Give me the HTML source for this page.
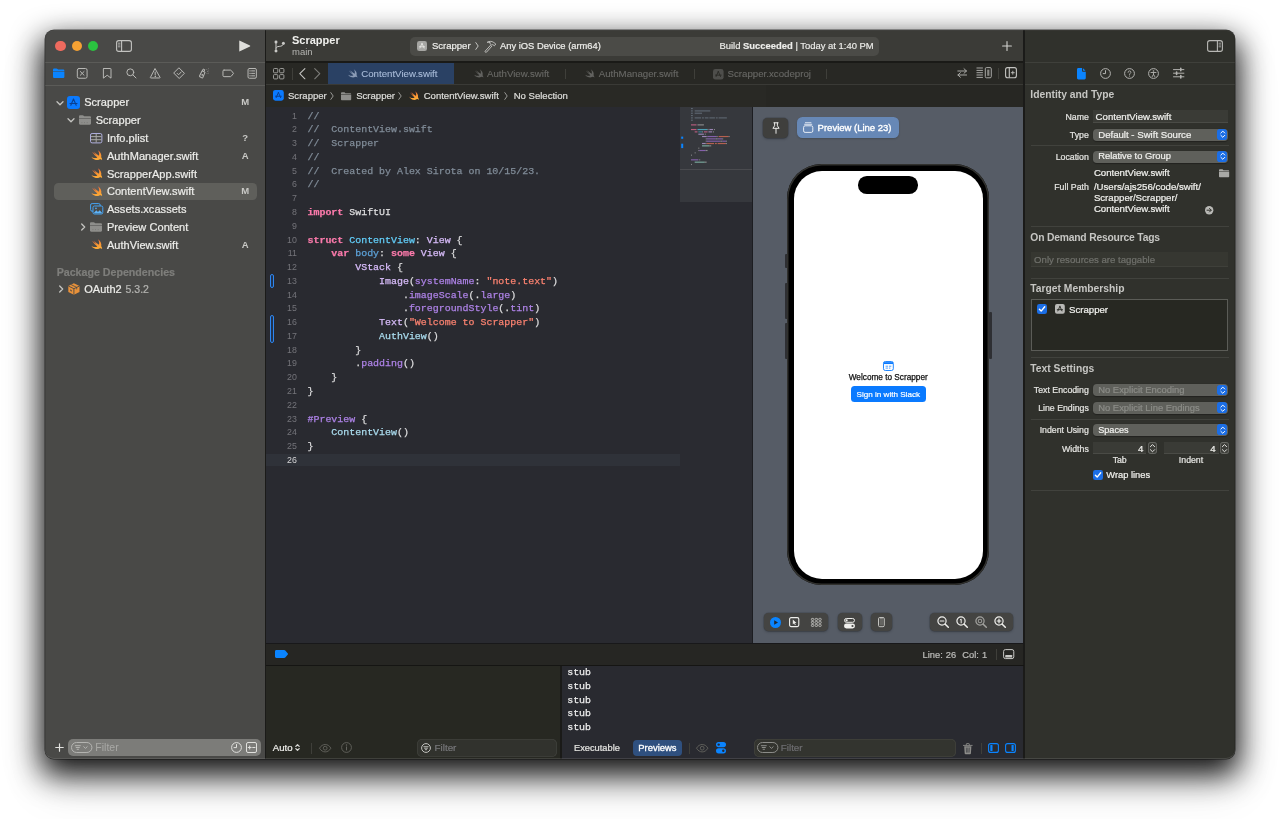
<!DOCTYPE html>
<html lang="en">
<head>
<meta charset="utf-8">
<title>Scrapper — ContentView.swift</title>
<style>
*{box-sizing:border-box;margin:0;padding:0}
html,body{width:1280px;height:819px;overflow:hidden;background:#fff}
body{font-family:"Liberation Sans",sans-serif;font-size:11px;color:#e6e6e4;position:relative;-webkit-font-smoothing:antialiased}
.abs{position:absolute}
#win{position:absolute;left:45px;top:30px;width:1190px;height:729px;border-radius:9px;background:#30312c;
  box-shadow:0 0 0 0.5px rgba(0,0,0,.6),0 12.500px 30px 3.500px rgba(0,0,0,.92),0 26px 50px rgba(0,0,0,.12)}
#clip{position:absolute;inset:0;border-radius:9px;overflow:hidden}
#hl{position:absolute;inset:0;border-radius:9px;box-shadow:inset 0 -1px 0 rgba(255,255,255,.13),inset 0 1px 0 rgba(255,255,255,.05),inset 0 0 0 1px rgba(0,0,0,.10);pointer-events:none}
/* panes: page coordinates (wrapper #pg is offset by -45,-30 inside the window) */
#pg{position:absolute;left:-45px;top:-30px;width:1280px;height:819px;will-change:transform}
#side{left:45px;top:30px;width:220px;height:729px;background:#494947}
#sdiv{left:265px;top:30px;width:1px;height:729px;background:#1b1b19}
#edtb{left:266px;top:30px;width:758px;height:31px;background:#3b3b37}
#edtbl{left:266px;top:61px;width:758px;height:2px;background:#1a1a17}
#tabbar{left:266px;top:63px;width:758px;height:22px;background:#282824}
#jump{left:266px;top:85px;width:758px;height:22px;background:#292925}
#code{left:266px;top:107px;width:414px;height:536px;background:#292a30}
#mini{left:680px;top:107px;width:73px;height:536px;background:#2a2b31}
#canvas{left:753px;top:107px;width:271px;height:536px;background:#565c66}
#dbar{left:266px;top:643px;width:758px;height:22px;background:#262623}
#vars{left:266px;top:665px;width:295px;height:94px;background:#272822}
#cons{left:561px;top:665px;width:463px;height:94px;background:#292a30}
#idiv{left:1023.400px;top:30px;width:1.200px;height:729px;background:#1b1b19}
#insp{left:1024.600px;top:30px;width:210.400px;height:729px;background:#30312c}
svg{display:block;overflow:visible}
.ic{position:absolute}

/* ---------- sidebar ---------- */
.tl{position:absolute;top:40.8px;width:10.4px;height:10.4px;border-radius:50%}
#side .ln{position:absolute;left:0;width:220px;height:1px;background:#5a5a57}
.nv{position:absolute;top:67.100px;width:12.400px;height:12.400px}
.nv *{fill:none;stroke:#b9b9b6;stroke-width:1.120;stroke-linecap:round;stroke-linejoin:round}
.row,.jb,.iv,.il,.dt{-webkit-text-stroke:.22px currentColor}
.tab{-webkit-text-stroke:.12px currentColor}
.row{position:absolute;height:18px;line-height:18px;font-size:11px;color:#ecece9;white-space:nowrap;letter-spacing:.05px}
.st{position:absolute;width:20px;left:235.2px;text-align:center;font-size:9.500px;font-weight:bold;color:#c9c9c6;height:18px;line-height:18px}
.chev{position:absolute;width:8px;height:8px}
.chev path{fill:none;stroke:#c4c4c1;stroke-width:1.3;stroke-linecap:round;stroke-linejoin:round}

/* ---------- editor toolbar / tabs / jump bar ---------- */
.t{position:absolute;white-space:nowrap;height:14px;line-height:14px}
.tab{font-size:9.700px;color:#686865}
.jb{font-size:9.550px;color:#dcdcd9}
.sep{position:absolute;width:1px;background:#3f3f3a}

/* ---------- source editor ---------- */
.cl,.stub{-webkit-text-stroke:.25px currentColor}
.cl{position:absolute;left:307.500px;height:13.770px;line-height:13.770px;font-family:"Liberation Mono",monospace;font-size:9.950px;color:#dfdfe0;white-space:pre;letter-spacing:0}
.lnn{position:absolute;left:266px;width:30.800px;text-align:right;height:13.770px;line-height:13.770px;font-size:8.800px;color:#74747a}
.k{color:#fb7aab;font-weight:bold}.c{color:#808c98}.s{color:#fb8270}.td{color:#62cdf8}.od{color:#5da2d8}.pc{color:#aadcee}.oc{color:#d8bcfa}.of{color:#ad82e6}

/* ---------- preview canvas ---------- */
.cbtn{position:absolute;top:612.600px;height:18.800px;border-radius:4.500px;background:#444442;box-shadow:0 0 0 .5px rgba(0,0,0,.18),0 1px 2.500px rgba(0,0,0,.28)}
.mg{position:absolute;top:615.800px;width:12px;height:12px}

/* ---------- debug area ---------- */
.dt{position:absolute;white-space:nowrap;height:14px;line-height:14px;font-size:9.600px}
.stub{position:absolute;left:567.200px;height:13.700px;line-height:13.700px;font-family:"Liberation Mono",monospace;font-size:9.950px;color:#ececec;white-space:pre}

/* ---------- inspector ---------- */
.ih{position:absolute;left:1030.300px;height:14px;line-height:14px;font-size:10.300px;font-weight:bold;color:#c6c6c3;white-space:nowrap}
.il{position:absolute;left:1025px;width:63.800px;text-align:right;height:13px;line-height:13px;font-size:8.750px;color:#e4e4e1;white-space:nowrap}
.iv{position:absolute;height:13px;line-height:13px;font-size:9.650px;color:#f0f0ed;white-space:nowrap}
.pop{position:absolute;left:1093px;width:135.400px;height:12px;border-radius:3.800px;background:#5f605b;overflow:hidden;box-shadow:0 .5px 1px rgba(0,0,0,.3)}
.pop i{position:absolute;right:1px;top:.7px;width:10px;height:10.600px;background:#1b6ee6;border-radius:2.800px}
.isep{position:absolute;left:1030.500px;width:198px;height:1px;background:#41423d}
.fld{position:absolute;background:#3a3b36;box-shadow:inset 0 -1px 0 #4a4b46}
.cb{position:absolute;width:10px;height:10px;border-radius:2.300px;background:#1b6ee6}
.stp{position:absolute;width:9px;height:12.400px;border-radius:3px;background:#3d3e39;box-shadow:inset 0 0 0 .9px #666762}
</style>
</head>
<body>
<div id="win">
 <div id="clip"><div id="pg">
  <div id="side" class="abs"></div>
  <div id="sdiv" class="abs"></div>
  <div id="edtb" class="abs"></div>
  <div id="edtbl" class="abs"></div>
  <div id="tabbar" class="abs"></div>
  <div id="jump" class="abs"></div>
  <div id="code" class="abs"></div>
  <div id="mini" class="abs"></div>
  <div id="canvas" class="abs"></div>
  <div id="dbar" class="abs"></div>
  <div id="vars" class="abs"></div>
  <div id="cons" class="abs"></div>
  <div id="idiv" class="abs"></div>
  <div id="insp" class="abs"></div>

  <!-- ===== sidebar content ===== -->
  <div class="tl" style="left:55.4px;background:#ee6a5e"></div>
  <div class="tl" style="left:71.7px;background:#f5a133"></div>
  <div class="tl" style="left:87.6px;background:#2bc240"></div>
  <!-- sidebar toggle -->
  <svg class="ic" style="left:116.2px;top:40.4px" width="16" height="12" viewBox="0 0 16 12"><rect x=".6" y=".6" width="14.8" height="10.8" rx="2.2" fill="none" stroke="#c3c3c0" stroke-width="1.1"/><path d="M5.6.8v10.4" stroke="#c3c3c0" stroke-width="1.1"/><path d="M2.3 3.2h1.7M2.3 5h1.7M2.3 6.8h1.7" stroke="#c3c3c0" stroke-width=".8" stroke-linecap="round"/></svg>
  <!-- run -->
  <svg class="ic" style="left:238.6px;top:40.3px" width="12" height="12" viewBox="0 0 12 12"><path d="M.9.7 11 5.6a.45.45 0 0 1 0 .8L.9 11.3a.45.45 0 0 1-.65-.4V1.1A.45.45 0 0 1 .9.7z" fill="#dededb"/></svg>
  <div class="abs" style="left:45px;top:61.5px;width:220px;height:1px;background:#5b5b58"></div>
  <div class="abs" style="left:45px;top:84.5px;width:220px;height:1px;background:#5b5b58"></div>
  <!-- navigator icons -->
  <svg class="ic" style="left:52.6px;top:68px" width="11.4" height="10.2" viewBox="0 0 11.4 10.2"><path d="M0 1.7C0 .9.6.4 1.3.4h2.2c.5 0 .8.2 1.1.5l.6.7h4.9c.7 0 1.3.5 1.3 1.3v.5H0z" fill="#0a84ff"/><path d="M0 4.1h11.4v4.6c0 .8-.6 1.3-1.3 1.3H1.3C.6 10 0 9.500 0 8.700z" fill="#0a84ff"/></svg>
  <svg class="nv" style="left:76.3px" viewBox="0 0 14 14"><rect x="1.5" y="1.700" width="11" height="11" rx="1.8"/><path d="M4.900 5.100l4.200 4.200M9.100 5.100l-4.200 4.200"/></svg>
  <svg class="nv" style="left:100.8px" viewBox="0 0 14 14"><path d="M3.300 1.700h7.400a.6.600 0 0 1 .6.600v10.300L7 9.300l-4.300 3.300V2.300a.6.600 0 0 1 .6-.6z"/></svg>
  <svg class="nv" style="left:124.8px" viewBox="0 0 14 14"><circle cx="6" cy="6" r="3.900"/><path d="M8.900 8.900l3.500 3.500" stroke-width="1.300"/></svg>
  <svg class="nv" style="left:149.1px" viewBox="0 0 14 14"><path d="M7 2.100 12.400 11.600a.5.500 0 0 1-.4.800H2a.5.500 0 0 1-.4-.8z"/><path d="M7 5.700v3" stroke-width="1.200"/><circle cx="7" cy="10.500" r=".35" style="fill:#b9b9b6"/></svg>
  <svg class="nv" style="left:173.4px" viewBox="0 0 14 14"><path d="M7 1.200 12.900 7.100 7 13 1.100 7.100z"/><path d="M4.700 7.200l1.600 1.600 3-3.200" stroke-width="1.300"/></svg>
  <svg class="nv" style="left:197.7px" viewBox="0 0 14 14"><path d="M4.200 4.300 7.600 5.700 6 11.800a.8.800 0 0 1-1 .5l-2.400-.9a.8.800 0 0 1-.5-1z" transform="rotate(8 5 8)"/><path d="M5.200 4.200l.6-1.900 1.800.7-.6 1.800"/><rect x="4" y="8" width="1.600" height="1.800" style="fill:#b9b9b6;stroke:none"/><circle cx="10" cy="2.600" r=".45" style="fill:#b9b9b6;stroke:none"/><circle cx="11.700" cy="2.100" r=".45" style="fill:#b9b9b6;stroke:none"/><circle cx="10.600" cy="4.800" r=".45" style="fill:#b9b9b6;stroke:none"/><circle cx="12.200" cy="4.400" r=".45" style="fill:#b9b9b6;stroke:none"/><circle cx="10.200" cy="7.300" r=".45" style="fill:#b9b9b6;stroke:none"/><circle cx="12" cy="6.900" r=".45" style="fill:#b9b9b6;stroke:none"/></svg>
  <svg class="nv" style="left:221.8px" viewBox="0 0 14 14"><path d="M2.300 3.500h7.200c.4 0 .7.100.9.400L13 7.200l-2.600 3.300c-.2.300-.5.400-.9.400H2.300c-.7 0-1.200-.5-1.200-1.200V4.700c0-.7.500-1.200 1.200-1.200z"/></svg>
  <svg class="nv" style="left:246.3px" viewBox="0 0 14 14"><rect x="2.300" y="1.700" width="9.400" height="11" rx="1.500"/><path d="M4.300 4.400h.6M6.300 4.400h3.400M4.300 7.200h.6M6.300 7.200h3.400M4.300 10h.6M6.300 10h3.400"/></svg>

  <!-- ===== navigator tree ===== -->
  <div class="abs" style="left:53.500px;top:182.500px;width:203.500px;height:17.600px;border-radius:4.500px;background:#5f5f5b"></div>
  <svg class="chev" style="left:55.6px;top:98.5px" viewBox="0 0 8 8"><path d="M1 2.700 4 5.700 7 2.700"/></svg>
  <svg class="ic" style="left:66.9px;top:95.7px" width="13" height="13" viewBox="0 0 13 13"><rect width="13" height="13" rx="3" fill="#0a7aff"/><path d="M6.500 3 3.800 9.200M6.500 3 9.200 9.200M3 7.500h7" stroke="#0b3f8f" stroke-width="1.100" stroke-linecap="round" fill="none"/></svg>
  <div class="row" style="left:84.2px;top:93.2px">Scrapper</div>
  <div class="st" style="top:93.2px">M</div>
  <svg class="chev" style="left:66.8px;top:116.3px" viewBox="0 0 8 8"><path d="M1 2.700 4 5.700 7 2.700"/></svg>
  <svg class="ic" style="left:78.8px;top:115.1px" width="12" height="9.800" viewBox="0 0 12 9.800"><path d="M0 1.500C0 .7.500.2 1.200.2h2.400c.5 0 .8.200 1.100.5l.6.600h5.500c.7 0 1.200.5 1.200 1.200v.4H0z" fill="#8e8e8b"/><path d="M0 3.600h12v4.900c0 .7-.5 1.200-1.200 1.200H1.200C.5 9.700 0 9.200 0 8.500z" fill="#8e8e8b"/><path d="M2.600 7.600h.7M5.200 7.600h.7M7.800 7.600h.7" stroke="#494947" stroke-width=".7" opacity=".55"/></svg>
  <div class="row" style="left:95.7px;top:111.0px">Scrapper</div>
  <svg class="ic" style="left:89.900px;top:132.70000000000002px" width="12.400" height="10.400" viewBox="0 0 12.400 10.400"><rect x=".5" y=".5" width="11.400" height="9.400" rx="1.600" fill="none" stroke="#b0b0e0" stroke-width="1"/><path d="M.8 3.600h10.800M.8 6.700h10.800M6.200.8v8.800" stroke="#a8a8a6" stroke-width="1"/></svg>
  <div class="row" style="left:106.9px;top:128.9px">Info.plist</div>
  <div class="st" style="top:128.9px">?</div>
  <svg class="ic" style="left:90.8px;top:150.1px" width="11.4" height="10.6" viewBox="2.2 3.2 18.8 16.8"><linearGradient id="sg1" x1="0" y1="0" x2="0.25" y2="1"><stop offset="0" stop-color="#ee4f3c"/><stop offset=".5" stop-color="#f78b33"/><stop offset="1" stop-color="#fbab38"/></linearGradient><path fill="url(#sg1)" d="M13.543 3.41c4.114 2.47 6.545 7.162 5.549 11.131-.024.093-.05.181-.076.272l.002.001c2.062 2.538 1.5 5.258 1.236 4.745-1.072-2.086-3.066-1.568-4.088-1.043a6.803 6.803 0 0 1-.281.158l-.02.012-.002.002c-2.115 1.123-4.957 1.205-7.812-.022a12.568 12.568 0 0 1-5.64-4.838c.649.48 1.35.902 2.097 1.252 3.019 1.414 6.051 1.311 8.197-.002C9.651 12.73 7.101 9.67 5.146 7.191a10.628 10.628 0 0 1-1.005-1.384c2.34 2.142 6.038 4.83 7.365 5.576C8.69 8.408 6.208 4.743 6.324 4.86c4.436 4.47 8.528 6.996 8.528 6.996.154.085.27.154.36.213.085-.215.16-.437.224-.668.708-2.588-.09-5.548-1.893-7.992z"/></svg>
  <div class="row" style="left:106.9px;top:146.7px">AuthManager.swift</div>
  <div class="st" style="top:146.7px">A</div>
  <svg class="ic" style="left:90.8px;top:167.9px" width="11.4" height="10.6" viewBox="2.2 3.2 18.8 16.8"><linearGradient id="sg2" x1="0" y1="0" x2="0.25" y2="1"><stop offset="0" stop-color="#ee4f3c"/><stop offset=".5" stop-color="#f78b33"/><stop offset="1" stop-color="#fbab38"/></linearGradient><path fill="url(#sg2)" d="M13.543 3.41c4.114 2.47 6.545 7.162 5.549 11.131-.024.093-.05.181-.076.272l.002.001c2.062 2.538 1.5 5.258 1.236 4.745-1.072-2.086-3.066-1.568-4.088-1.043a6.803 6.803 0 0 1-.281.158l-.02.012-.002.002c-2.115 1.123-4.957 1.205-7.812-.022a12.568 12.568 0 0 1-5.64-4.838c.649.48 1.35.902 2.097 1.252 3.019 1.414 6.051 1.311 8.197-.002C9.651 12.73 7.101 9.67 5.146 7.191a10.628 10.628 0 0 1-1.005-1.384c2.34 2.142 6.038 4.83 7.365 5.576C8.69 8.408 6.208 4.743 6.324 4.86c4.436 4.47 8.528 6.996 8.528 6.996.154.085.27.154.36.213.085-.215.16-.437.224-.668.708-2.588-.09-5.548-1.893-7.992z"/></svg>
  <div class="row" style="left:106.9px;top:164.5px">ScrapperApp.swift</div>
  <svg class="ic" style="left:90.8px;top:185.70000000000002px" width="11.4" height="10.6" viewBox="2.2 3.2 18.8 16.8"><linearGradient id="sg3" x1="0" y1="0" x2="0.25" y2="1"><stop offset="0" stop-color="#ee4f3c"/><stop offset=".5" stop-color="#f78b33"/><stop offset="1" stop-color="#fbab38"/></linearGradient><path fill="url(#sg3)" d="M13.543 3.41c4.114 2.47 6.545 7.162 5.549 11.131-.024.093-.05.181-.076.272l.002.001c2.062 2.538 1.5 5.258 1.236 4.745-1.072-2.086-3.066-1.568-4.088-1.043a6.803 6.803 0 0 1-.281.158l-.02.012-.002.002c-2.115 1.123-4.957 1.205-7.812-.022a12.568 12.568 0 0 1-5.64-4.838c.649.48 1.35.902 2.097 1.252 3.019 1.414 6.051 1.311 8.197-.002C9.651 12.73 7.101 9.67 5.146 7.191a10.628 10.628 0 0 1-1.005-1.384c2.34 2.142 6.038 4.83 7.365 5.576C8.69 8.408 6.208 4.743 6.324 4.86c4.436 4.47 8.528 6.996 8.528 6.996.154.085.27.154.36.213.085-.215.16-.437.224-.668.708-2.588-.09-5.548-1.893-7.992z"/></svg>
  <div class="row" style="left:106.9px;top:182.3px">ContentView.swift</div>
  <div class="st" style="top:182.3px">M</div>
  <svg class="ic" style="left:89.600px;top:203.1px" width="13.400" height="11.600" viewBox="0 0 13.400 11.600"><rect x=".6" y=".6" width="9.600" height="7.600" rx="1.500" fill="none" stroke="#45a5f5" stroke-width="1"/><rect x="3" y="3" width="9.800" height="8" rx="1.500" fill="#494947" stroke="#45a5f5" stroke-width="1"/><path d="M3.600 10.300 6.300 7.300 8 9l1.700-1.800 2.700 3.100z" fill="#5db2f7"/><circle cx="6" cy="5.400" r=".8" fill="#5db2f7"/></svg>
  <div class="row" style="left:106.9px;top:200.1px">Assets.xcassets</div>
  <svg class="chev" style="left:79.1px;top:222.9px" viewBox="0 0 8 8"><path d="M2.700 1 5.700 4 2.700 7"/></svg>
  <svg class="ic" style="left:90.2px;top:222.0px" width="12" height="9.800" viewBox="0 0 12 9.800"><path d="M0 1.500C0 .7.500.2 1.200.2h2.400c.5 0 .8.200 1.100.5l.6.600h5.500c.7 0 1.200.5 1.200 1.200v.4H0z" fill="#8e8e8b"/><path d="M0 3.600h12v4.900c0 .7-.5 1.200-1.200 1.200H1.200C.5 9.700 0 9.200 0 8.500z" fill="#8e8e8b"/><path d="M2.600 7.600h.7M5.200 7.600h.7M7.800 7.600h.7" stroke="#494947" stroke-width=".7" opacity=".55"/></svg>
  <div class="row" style="left:106.9px;top:217.9px">Preview Content</div>
  <svg class="ic" style="left:90.8px;top:239.1px" width="11.4" height="10.6" viewBox="2.2 3.2 18.8 16.8"><linearGradient id="sg4" x1="0" y1="0" x2="0.25" y2="1"><stop offset="0" stop-color="#ee4f3c"/><stop offset=".5" stop-color="#f78b33"/><stop offset="1" stop-color="#fbab38"/></linearGradient><path fill="url(#sg4)" d="M13.543 3.41c4.114 2.47 6.545 7.162 5.549 11.131-.024.093-.05.181-.076.272l.002.001c2.062 2.538 1.5 5.258 1.236 4.745-1.072-2.086-3.066-1.568-4.088-1.043a6.803 6.803 0 0 1-.281.158l-.02.012-.002.002c-2.115 1.123-4.957 1.205-7.812-.022a12.568 12.568 0 0 1-5.64-4.838c.649.48 1.35.902 2.097 1.252 3.019 1.414 6.051 1.311 8.197-.002C9.651 12.73 7.101 9.67 5.146 7.191a10.628 10.628 0 0 1-1.005-1.384c2.34 2.142 6.038 4.83 7.365 5.576C8.69 8.408 6.208 4.743 6.324 4.86c4.436 4.47 8.528 6.996 8.528 6.996.154.085.27.154.36.213.085-.215.16-.437.224-.668.708-2.588-.09-5.548-1.893-7.992z"/></svg>
  <div class="row" style="left:106.9px;top:235.7px">AuthView.swift</div>
  <div class="st" style="top:235.7px">A</div>
  <div class="row" style="left:56.700px;top:263.300px;font-weight:bold;font-size:10.650px;color:#7e7e7b;letter-spacing:0">Package Dependencies</div>
  <svg class="chev" style="left:56.5px;top:284.6px" viewBox="0 0 8 8"><path d="M2.700 1 5.700 4 2.700 7"/></svg>
  <svg class="ic" style="left:67.800px;top:282.6px" width="11.800" height="12" viewBox="0 0 11.800 12"><path d="M5.900.3 11.500 3v6L5.900 11.700.3 9V3z" fill="#e8913a"/><path d="M.3 3 5.900 5.700 11.500 3M5.900 5.700v6" stroke="#494947" stroke-width=".9" fill="none"/><path d="M3.100 1.650 8.700 4.350v2" stroke="#494947" stroke-width=".8" fill="none"/><path d="M2 6.200l2 1v1.500l-2-1z" fill="#494947" opacity=".7"/></svg>
  <div class="row" style="left:84.2px;top:279.6px">OAuth2<span style="color:#b3b3b0;margin-left:3.600px;font-size:10.500px">5.3.2</span></div>
  <svg class="ic" style="left:54.900px;top:743.300px" width="9" height="9" viewBox="0 0 10 10"><path d="M5 .8v8.400M.8 5h8.400" stroke="#e2e2df" stroke-width="1.300" stroke-linecap="round"/></svg>
  <div class="abs" style="left:68px;top:739px;width:193px;height:17.400px;border-radius:5px;background:#7c7c79"></div>
  <svg class="ic" style="left:71.200px;top:742.300px" width="21.400" height="11" viewBox="0 0 21.400 11"><rect x=".5" y=".5" width="20.400" height="10" rx="5" fill="none" stroke="#b5b5b2" stroke-width="1"/><path d="M4.300 3.700h5M5.200 5.500h3.200M6.100 7.300h1.400" stroke="#b5b5b2" stroke-width="1" stroke-linecap="round"/><path d="M12.800 4.700l1.700 1.700 1.700-1.700" stroke="#b5b5b2" stroke-width="1" fill="none" stroke-linecap="round" stroke-linejoin="round"/></svg>
  <div class="abs" style="left:95.300px;top:739px;height:17.400px;line-height:17.400px;font-size:10.500px;color:#a9a9a6">Filter</div>
  <svg class="ic" style="left:231.400px;top:742.200px" width="11" height="11" viewBox="0 0 11 11"><circle cx="5.500" cy="5.500" r="4.900" fill="none" stroke="#e0e0dd" stroke-width="1"/><path d="M5.500 2.500v3.100H3" stroke="#e0e0dd" stroke-width="1" fill="none" stroke-linecap="round"/></svg>
  <svg class="ic" style="left:245.800px;top:742.200px" width="11" height="11" viewBox="0 0 11 11"><rect x=".5" y=".5" width="10" height="10" rx="1.500" fill="none" stroke="#e0e0dd" stroke-width="1"/><path d="M2.200 5.500h3M3.700 4v3M6.700 5.500h2.300" stroke="#e0e0dd" stroke-width="1" stroke-linecap="round"/></svg>

  <!-- ===== editor toolbar ===== -->
  <svg class="ic" style="left:273.800px;top:39.800px" width="11.400" height="13" viewBox="0 0 11.400 13"><circle cx="2" cy="2" r="1.500" fill="#c9c9c6"/><circle cx="2" cy="11" r="1.500" fill="#c9c9c6"/><circle cx="9.400" cy="3.300" r="1.500" fill="#c9c9c6"/><path d="M2 2v9M9.400 3.300c0 2.300-1.800 2.900-4.200 3.100C3.400 6.600 2 7 2 8.600" fill="none" stroke="#c9c9c6" stroke-width="1"/></svg>
  <div class="t" style="left:292px;top:33.300px;font-size:11px;font-weight:bold;color:#f0f0ed">Scrapper</div>
  <div class="t" style="left:292px;top:45.200px;font-size:9.500px;color:#b4b4b1">main</div>
  <div class="abs" style="left:410px;top:37px;width:469px;height:18.500px;border-radius:5px;background:#4b4b47"></div>
  <svg class="ic" style="left:417px;top:41.2px" width="10" height="10" viewBox="0 0 13 13"><rect width="13" height="13" rx="3" fill="#a6a6a3"/><path d="M6.500 3 3.800 9.200M6.500 3 9.200 9.200M3 7.500h7" stroke="#e4e4e1" stroke-width="1.200" stroke-linecap="round" fill="none"/></svg>
  <div class="t" style="left:432px;top:39.200px;font-size:9.500px;color:#eeeeeb;-webkit-text-stroke:.2px #eeeeeb">Scrapper</div>
  <svg class="ic" style="left:474.5px;top:42.2px" width="4" height="8" viewBox="0 0 4 8"><path d="M.8.600 3.200 4 .8 7.400" fill="none" stroke="#d0d0cd" stroke-width=".9" stroke-linecap="round" stroke-linejoin="round"/></svg>
  <svg class="ic" style="left:484px;top:39.800px" width="12.600" height="12.600" viewBox="0 0 12.600 12.600"><path d="M3.200 2.300c2-1.300 4.700-1.200 6.600.2l2 1.500-1.400 1.800-1.600-1.200-1 .5-1.900-1.500.4-.9c-.9-.5-2-.6-3.100-.4z" fill="none" stroke="#cfcfcc" stroke-width=".85" stroke-linejoin="round"/><path d="M6.800 5 1.300 11a.85.850 0 0 0 1.250 1.150L8 6" fill="none" stroke="#cfcfcc" stroke-width=".85" stroke-linejoin="round"/></svg>
  <div class="t" style="left:500px;top:39.200px;font-size:9.370px;color:#eeeeeb;-webkit-text-stroke:.2px #eeeeeb">Any iOS Device (arm64)</div>
  <div class="t" style="left:719.500px;top:39.200px;font-size:9.430px;color:#eeeeeb;-webkit-text-stroke:.15px #eeeeeb">Build <b>Succeeded</b> | Today at 1:40 PM</div>
  <svg class="ic" style="left:1002px;top:41px" width="10" height="10" viewBox="0 0 10 10"><path d="M5 .6v8.800M.6 5h8.800" stroke="#d2d2cf" stroke-width="1.100" stroke-linecap="round"/></svg>
  <svg class="ic" style="left:1206.600px;top:40.400px" width="16" height="12" viewBox="0 0 16 12"><rect x=".6" y=".6" width="14.800" height="10.800" rx="2.200" fill="none" stroke="#b8b8b5" stroke-width="1.100"/><path d="M10.400.8v10.400" stroke="#b8b8b5" stroke-width="1.100"/><path d="M12 3.200h1.700M12 5h1.700M12 6.800h1.700" stroke="#b8b8b5" stroke-width=".8" stroke-linecap="round"/></svg>
    <!-- ===== tab bar ===== -->
  <svg class="ic" style="left:273px;top:68px" width="11.400" height="11.400" viewBox="0 0 11.400 11.400"><g fill="none" stroke="#9e9e9b" stroke-width="1"><rect x=".5" y=".5" width="4.300" height="4.300" rx=".9"/><rect x="6.600" y=".5" width="4.300" height="4.300" rx=".9"/><rect x=".5" y="6.600" width="4.300" height="4.300" rx=".9"/><rect x="6.600" y="6.600" width="4.300" height="4.300" rx=".9"/></g></svg>
  <div class="sep" style="left:291.500px;top:68px;height:12px"></div>
  <svg class="ic" style="left:298.600px;top:68px" width="6.600" height="11.400" viewBox="0 0 6.600 11.400"><path d="M5.900.6.800 5.700l5.100 5.100" fill="none" stroke="#c4c4c1" stroke-width="1.100" stroke-linecap="round" stroke-linejoin="round"/></svg>
  <svg class="ic" style="left:314.400px;top:68px" width="6.600" height="11.400" viewBox="0 0 6.600 11.400"><path d="M.7.600 5.800 5.700.7 10.800" fill="none" stroke="#7c7c79" stroke-width="1.100" stroke-linecap="round" stroke-linejoin="round"/></svg>
  <div class="abs" style="left:328px;top:63px;width:126px;height:22px;background:#2a4164"></div>
  <svg class="ic" style="left:347.5px;top:69.3px" width="9.6" height="9" viewBox="2.200 3.200 18.800 16.800"><path fill="#8b9cb6" d="M13.543 3.410c4.114 2.470 6.545 7.162 5.549 11.131-.024.093-.05.181-.076.272l.002.001c2.062 2.538 1.500 5.258 1.236 4.745-1.072-2.086-3.066-1.568-4.088-1.043a6.803 6.803 0 0 1-.281.158l-.02.012-.002.002c-2.115 1.123-4.957 1.205-7.812-.022a12.568 12.568 0 0 1-5.640-4.838c.649.480 1.350.902 2.097 1.252 3.019 1.414 6.051 1.311 8.197-.002C9.651 12.730 7.101 9.670 5.146 7.191a10.628 10.628 0 0 1-1.005-1.384c2.340 2.142 6.038 4.830 7.365 5.576C8.690 8.408 6.208 4.743 6.324 4.860c4.436 4.470 8.528 6.996 8.528 6.996.154.085.270.154.360.213.085-.215.160-.437.224-.668.708-2.588-.09-5.548-1.893-7.992z"/></svg>
  <div class="t tab" style="left:361.200px;top:66.800px;color:#a8bbd8">ContentView.swift</div>
  <svg class="ic" style="left:473.7px;top:69.3px" width="9.6" height="9" viewBox="2.200 3.200 18.800 16.800"><path fill="#62625f" d="M13.543 3.410c4.114 2.470 6.545 7.162 5.549 11.131-.024.093-.05.181-.076.272l.002.001c2.062 2.538 1.500 5.258 1.236 4.745-1.072-2.086-3.066-1.568-4.088-1.043a6.803 6.803 0 0 1-.281.158l-.02.012-.002.002c-2.115 1.123-4.957 1.205-7.812-.022a12.568 12.568 0 0 1-5.640-4.838c.649.480 1.350.902 2.097 1.252 3.019 1.414 6.051 1.311 8.197-.002C9.651 12.730 7.101 9.670 5.146 7.191a10.628 10.628 0 0 1-1.005-1.384c2.340 2.142 6.038 4.830 7.365 5.576C8.690 8.408 6.208 4.743 6.324 4.860c4.436 4.470 8.528 6.996 8.528 6.996.154.085.270.154.360.213.085-.215.160-.437.224-.668.708-2.588-.09-5.548-1.893-7.992z"/></svg>
  <div class="t tab" style="left:487px;top:66.800px">AuthView.swift</div>
  <div class="sep" style="left:565px;top:69px;height:10px"></div>
  <svg class="ic" style="left:585px;top:69.3px" width="9.6" height="9" viewBox="2.200 3.200 18.800 16.800"><path fill="#62625f" d="M13.543 3.410c4.114 2.470 6.545 7.162 5.549 11.131-.024.093-.05.181-.076.272l.002.001c2.062 2.538 1.500 5.258 1.236 4.745-1.072-2.086-3.066-1.568-4.088-1.043a6.803 6.803 0 0 1-.281.158l-.02.012-.002.002c-2.115 1.123-4.957 1.205-7.812-.022a12.568 12.568 0 0 1-5.640-4.838c.649.480 1.350.902 2.097 1.252 3.019 1.414 6.051 1.311 8.197-.002C9.651 12.730 7.101 9.670 5.146 7.191a10.628 10.628 0 0 1-1.005-1.384c2.340 2.142 6.038 4.830 7.365 5.576C8.690 8.408 6.208 4.743 6.324 4.860c4.436 4.470 8.528 6.996 8.528 6.996.154.085.270.154.360.213.085-.215.160-.437.224-.668.708-2.588-.09-5.548-1.893-7.992z"/></svg>
  <div class="t tab" style="left:598.700px;top:66.800px">AuthManager.swift</div>
  <div class="sep" style="left:693.500px;top:69px;height:10px"></div>
  <svg class="ic" style="left:713px;top:68.6px" width="10.6" height="10.6" viewBox="0 0 13 13"><rect width="13" height="13" rx="3" fill="#4e4e4b"/><path d="M6.500 3 3.800 9.200M6.500 3 9.200 9.200M3 7.500h7" stroke="#2a2a26" stroke-width="1.200" stroke-linecap="round" fill="none"/></svg>
  <div class="t tab" style="left:727.500px;top:66.800px">Scrapper.xcodeproj</div>
  <div class="sep" style="left:826px;top:69px;height:10px"></div>
  <svg class="ic" style="left:956.800px;top:68px" width="10.400" height="10" viewBox="0 0 10.400 10"><path d="M.8 3h8.600M7 .700 9.500 3 7 5.300M9.600 7H1M3.400 4.700.9 7l2.500 2.300" fill="none" stroke="#a9a9a6" stroke-width="1" stroke-linecap="round" stroke-linejoin="round"/></svg>
  <svg class="ic" style="left:975.500px;top:67.400px" width="16" height="11.400" viewBox="0 0 16 11.400"><path d="M.5 1h6.400M.5 3.400h6.400M.5 5.700h6.400M.5 8h6.400M.5 10.400h6.400" stroke="#a9a9a6" stroke-width="1"/><rect x="9.300" y=".6" width="6" height="10.200" rx="1.200" fill="none" stroke="#a9a9a6" stroke-width="1"/><rect x="11.200" y="2.600" width="2.200" height="6.200" fill="#a9a9a6" opacity=".75"/></svg>
  <div class="sep" style="left:998px;top:68px;height:11px"></div>
  <svg class="ic" style="left:1005px;top:67.400px" width="12" height="11.400" viewBox="0 0 12 11.400"><rect x=".6" y=".6" width="10.800" height="10.200" rx="2" fill="none" stroke="#c4c4c1" stroke-width="1.100"/><path d="M4.300.8v9.800" stroke="#c4c4c1" stroke-width="1.100" fill="none"/><path d="M5.900 5.700h3.800M7.800 3.800v3.800" stroke="#c4c4c1" stroke-width=".9" fill="none"/></svg>
  <div class="abs" style="left:266px;top:84.300px;width:757.400px;height:1px;background:#3a3a36"></div>
<div class="abs" style="left:766px;top:85.300px;width:257.400px;height:21.700px;background:#272723"></div>
    <!-- ===== jump bar ===== -->
  <svg class="ic" style="left:273px;top:90.4px" width="10.8" height="10.8" viewBox="0 0 13 13"><rect width="13" height="13" rx="3" fill="#0a7aff"/><path d="M6.500 3 3.800 9.200M6.500 3 9.200 9.200M3 7.500h7" stroke="#0b3f8f" stroke-width="1.200" stroke-linecap="round" fill="none"/></svg>
  <div class="t jb" style="left:288px;top:88.800px">Scrapper</div>
  <svg class="ic" style="left:330.2px;top:91.8px" width="4" height="8" viewBox="0 0 4 8"><path d="M.8.600 3.200 4 .8 7.400" fill="none" stroke="#a5a5a2" stroke-width=".9" stroke-linecap="round" stroke-linejoin="round"/></svg>
  <svg class="ic" style="left:341.200px;top:91.600px" width="10.200" height="8.400" viewBox="0 0 12 9.800"><path d="M0 1.500C0 .7.500.2 1.200.2h2.400c.5 0 .8.200 1.100.5l.6.600h5.500c.7 0 1.200.5 1.200 1.200v.4H0z" fill="#8e8e8b"/><path d="M0 3.600h12v4.900c0 .7-.5 1.200-1.200 1.200H1.200C.5 9.700 0 9.200 0 8.500z" fill="#8e8e8b"/></svg>
  <div class="t jb" style="left:356.200px;top:88.800px">Scrapper</div>
  <svg class="ic" style="left:398.4px;top:91.8px" width="4" height="8" viewBox="0 0 4 8"><path d="M.8.600 3.200 4 .8 7.400" fill="none" stroke="#a5a5a2" stroke-width=".9" stroke-linecap="round" stroke-linejoin="round"/></svg>
  <svg class="ic" style="left:409.2px;top:91.2px" width="10" height="9.300" viewBox="2.2 3.2 18.8 16.8"><linearGradient id="sg20" x1="0" y1="0" x2="0.25" y2="1"><stop offset="0" stop-color="#ee4f3c"/><stop offset=".5" stop-color="#f78b33"/><stop offset="1" stop-color="#fbab38"/></linearGradient><path fill="url(#sg20)" d="M13.543 3.41c4.114 2.47 6.545 7.162 5.549 11.131-.024.093-.05.181-.076.272l.002.001c2.062 2.538 1.5 5.258 1.236 4.745-1.072-2.086-3.066-1.568-4.088-1.043a6.803 6.803 0 0 1-.281.158l-.02.012-.002.002c-2.115 1.123-4.957 1.205-7.812-.022a12.568 12.568 0 0 1-5.64-4.838c.649.48 1.35.902 2.097 1.252 3.019 1.414 6.051 1.311 8.197-.002C9.651 12.73 7.101 9.67 5.146 7.191a10.628 10.628 0 0 1-1.005-1.384c2.34 2.142 6.038 4.83 7.365 5.576C8.69 8.408 6.208 4.743 6.324 4.86c4.436 4.47 8.528 6.996 8.528 6.996.154.085.27.154.36.213.085-.215.16-.437.224-.668.708-2.588-.09-5.548-1.893-7.992z"/></svg>
  <div class="t jb" style="left:423.700px;top:88.800px">ContentView.swift</div>
  <svg class="ic" style="left:504.4px;top:91.8px" width="4" height="8" viewBox="0 0 4 8"><path d="M.8.600 3.200 4 .8 7.400" fill="none" stroke="#a5a5a2" stroke-width=".9" stroke-linecap="round" stroke-linejoin="round"/></svg>
  <div class="t jb" style="left:513.700px;top:88.800px">No Selection</div>

  <!-- ===== source editor ===== -->
  <div class="abs" style="left:266px;top:453.600px;width:414px;height:12.800px;background:#2f3239"></div>
  <div class="lnn" style="top:109.56px">1</div>
  <div class="cl" style="top:109.56px"><span class="c">//</span></div>
  <div class="lnn" style="top:123.34px">2</div>
  <div class="cl" style="top:123.34px"><span class="c">//  ContentView.swift</span></div>
  <div class="lnn" style="top:137.11px">3</div>
  <div class="cl" style="top:137.11px"><span class="c">//  Scrapper</span></div>
  <div class="lnn" style="top:150.88px">4</div>
  <div class="cl" style="top:150.88px"><span class="c">//</span></div>
  <div class="lnn" style="top:164.64px">5</div>
  <div class="cl" style="top:164.64px"><span class="c">//  Created by Alex Sirota on 10/15/23.</span></div>
  <div class="lnn" style="top:178.42px">6</div>
  <div class="cl" style="top:178.42px"><span class="c">//</span></div>
  <div class="lnn" style="top:192.19px">7</div>
  <div class="lnn" style="top:205.95px">8</div>
  <div class="cl" style="top:205.95px"><span class="k">import</span> SwiftUI</div>
  <div class="lnn" style="top:219.73px">9</div>
  <div class="lnn" style="top:233.50px">10</div>
  <div class="cl" style="top:233.50px"><span class="k">struct</span> <span class="td">ContentView</span>: <span class="oc">View</span> {</div>
  <div class="lnn" style="top:247.26px">11</div>
  <div class="cl" style="top:247.26px">    <span class="k">var</span> <span class="od">body</span>: <span class="k">some</span> <span class="oc">View</span> {</div>
  <div class="lnn" style="top:261.04px">12</div>
  <div class="cl" style="top:261.04px">        <span class="oc">VStack</span> {</div>
  <div class="lnn" style="top:274.81px">13</div>
  <div class="cl" style="top:274.81px">            <span class="oc">Image</span>(<span class="of">systemName</span>: <span class="s">"note.text"</span>)</div>
  <div class="lnn" style="top:288.58px">14</div>
  <div class="cl" style="top:288.58px">                .<span class="of">imageScale</span>(.<span class="of">large</span>)</div>
  <div class="lnn" style="top:302.34px">15</div>
  <div class="cl" style="top:302.34px">                .<span class="of">foregroundStyle</span>(.<span class="of">tint</span>)</div>
  <div class="lnn" style="top:316.11px">16</div>
  <div class="cl" style="top:316.11px">            <span class="oc">Text</span>(<span class="s">"Welcome to Scrapper"</span>)</div>
  <div class="lnn" style="top:329.89px">17</div>
  <div class="cl" style="top:329.89px">            <span class="pc">AuthView</span>()</div>
  <div class="lnn" style="top:343.66px">18</div>
  <div class="cl" style="top:343.66px">        }</div>
  <div class="lnn" style="top:357.43px">19</div>
  <div class="cl" style="top:357.43px">        .<span class="of">padding</span>()</div>
  <div class="lnn" style="top:371.20px">20</div>
  <div class="cl" style="top:371.20px">    }</div>
  <div class="lnn" style="top:384.96px">21</div>
  <div class="cl" style="top:384.96px">}</div>
  <div class="lnn" style="top:398.74px">22</div>
  <div class="lnn" style="top:412.51px">23</div>
  <div class="cl" style="top:412.51px"><span class="of">#Preview</span> {</div>
  <div class="lnn" style="top:426.27px">24</div>
  <div class="cl" style="top:426.27px">    <span class="pc">ContentView</span>()</div>
  <div class="lnn" style="top:440.05px">25</div>
  <div class="cl" style="top:440.05px">}</div>
  <div class="lnn" style="top:453.82px;color:#d4d4d6">26</div>
  <div class="abs" style="left:270px;top:273.600px;width:4.400px;height:14px;border:1.400px solid #2d86f0;border-radius:2.200px;background:#21324d"></div>
  <div class="abs" style="left:270px;top:314.900px;width:4.400px;height:27.800px;border:1.400px solid #2d86f0;border-radius:2.200px;background:#21324d"></div>
  <svg class="ic" style="left:680px;top:107px" width="73" height="536" viewBox="0 0 73 536"><rect x="0" y="0" width="72" height="94.500" fill="#36383d" shape-rendering="crispEdges"/><rect x="0" y="62" width="72" height="1" fill="#4a4b4f" shape-rendering="crispEdges"/><rect x="72" y="0" width="1" height="536" fill="#1c1d21" shape-rendering="crispEdges"/><rect x="11.00" y="1.00" width="1.84" height="1.150" fill="#5d6670"/><rect x="11.00" y="3.33" width="1.84" height="1.150" fill="#5d6670"/><rect x="14.68" y="3.33" width="15.64" height="1.150" fill="#5d6670"/><rect x="11.00" y="5.66" width="1.84" height="1.150" fill="#5d6670"/><rect x="14.68" y="5.66" width="7.36" height="1.150" fill="#5d6670"/><rect x="11.00" y="7.99" width="1.84" height="1.150" fill="#5d6670"/><rect x="11.00" y="10.32" width="1.84" height="1.150" fill="#5d6670"/><rect x="14.68" y="10.32" width="6.44" height="1.150" fill="#5d6670"/><rect x="22.04" y="10.32" width="1.84" height="1.150" fill="#5d6670"/><rect x="24.80" y="10.32" width="3.68" height="1.150" fill="#5d6670"/><rect x="29.40" y="10.32" width="5.52" height="1.150" fill="#5d6670"/><rect x="35.84" y="10.32" width="1.84" height="1.150" fill="#5d6670"/><rect x="38.60" y="10.32" width="8.28" height="1.150" fill="#5d6670"/><rect x="11.00" y="12.65" width="1.84" height="1.150" fill="#5d6670"/><rect x="11.00" y="17.31" width="5.52" height="1.150" fill="#b85d7f"/><rect x="17.44" y="17.31" width="6.44" height="1.150" fill="#8a8a8c"/><rect x="11.00" y="21.97" width="5.52" height="1.150" fill="#b85d7f"/><rect x="17.44" y="21.97" width="10.12" height="1.150" fill="#4d9fb5"/><rect x="27.56" y="21.97" width="0.92" height="1.150" fill="#8a8a8c"/><rect x="29.40" y="21.97" width="3.68" height="1.150" fill="#9a85b4"/><rect x="34.00" y="21.97" width="0.92" height="1.150" fill="#8a8a8c"/><rect x="14.68" y="24.30" width="2.76" height="1.150" fill="#b85d7f"/><rect x="18.36" y="24.30" width="3.68" height="1.150" fill="#3b7f93"/><rect x="22.04" y="24.30" width="0.92" height="1.150" fill="#8a8a8c"/><rect x="23.88" y="24.30" width="3.68" height="1.150" fill="#b85d7f"/><rect x="28.48" y="24.30" width="3.68" height="1.150" fill="#9a85b4"/><rect x="33.08" y="24.30" width="0.92" height="1.150" fill="#8a8a8c"/><rect x="18.36" y="26.63" width="5.52" height="1.150" fill="#9a85b4"/><rect x="24.80" y="26.63" width="0.92" height="1.150" fill="#8a8a8c"/><rect x="22.04" y="28.96" width="4.60" height="1.150" fill="#9a85b4"/><rect x="26.64" y="28.96" width="0.92" height="1.150" fill="#8a8a8c"/><rect x="27.56" y="28.96" width="9.20" height="1.150" fill="#8460aa"/><rect x="36.76" y="28.96" width="0.92" height="1.150" fill="#8a8a8c"/><rect x="38.60" y="28.96" width="10.12" height="1.150" fill="#b5604f"/><rect x="48.72" y="28.96" width="0.92" height="1.150" fill="#8a8a8c"/><rect x="25.72" y="31.29" width="0.92" height="1.150" fill="#8a8a8c"/><rect x="26.64" y="31.29" width="9.20" height="1.150" fill="#8460aa"/><rect x="35.84" y="31.29" width="1.84" height="1.150" fill="#8a8a8c"/><rect x="37.68" y="31.29" width="4.60" height="1.150" fill="#8460aa"/><rect x="42.28" y="31.29" width="0.92" height="1.150" fill="#8a8a8c"/><rect x="25.72" y="33.62" width="0.92" height="1.150" fill="#8a8a8c"/><rect x="26.64" y="33.62" width="13.80" height="1.150" fill="#8460aa"/><rect x="40.44" y="33.62" width="1.84" height="1.150" fill="#8a8a8c"/><rect x="42.28" y="33.62" width="3.68" height="1.150" fill="#8460aa"/><rect x="45.96" y="33.62" width="0.92" height="1.150" fill="#8a8a8c"/><rect x="22.04" y="35.95" width="3.68" height="1.150" fill="#9a85b4"/><rect x="25.72" y="35.95" width="0.92" height="1.150" fill="#8a8a8c"/><rect x="26.64" y="35.95" width="7.36" height="1.150" fill="#b5604f"/><rect x="34.92" y="35.95" width="1.84" height="1.150" fill="#b5604f"/><rect x="37.68" y="35.95" width="8.28" height="1.150" fill="#b5604f"/><rect x="45.96" y="35.95" width="0.92" height="1.150" fill="#8a8a8c"/><rect x="22.04" y="38.28" width="7.36" height="1.150" fill="#7aab9f"/><rect x="29.40" y="38.28" width="1.84" height="1.150" fill="#8a8a8c"/><rect x="18.36" y="40.61" width="0.92" height="1.150" fill="#8a8a8c"/><rect x="18.36" y="42.94" width="0.92" height="1.150" fill="#8a8a8c"/><rect x="19.28" y="42.94" width="6.44" height="1.150" fill="#8460aa"/><rect x="25.72" y="42.94" width="1.84" height="1.150" fill="#8a8a8c"/><rect x="14.68" y="45.27" width="0.92" height="1.150" fill="#8a8a8c"/><rect x="11.00" y="47.60" width="0.92" height="1.150" fill="#8a8a8c"/><rect x="11.00" y="52.26" width="7.36" height="1.150" fill="#8460aa"/><rect x="19.28" y="52.26" width="0.92" height="1.150" fill="#8a8a8c"/><rect x="14.68" y="54.59" width="10.12" height="1.150" fill="#7aab9f"/><rect x="24.80" y="54.59" width="1.84" height="1.150" fill="#8a8a8c"/><rect x="11.00" y="56.92" width="0.92" height="1.150" fill="#8a8a8c"/><rect x="1.200" y="29.600" width="2" height="2.200" fill="#0a84ff"/><rect x="1.200" y="36.700" width="2" height="4.400" fill="#0a84ff"/></svg>

  <!-- ===== preview canvas ===== -->
  <div class="abs" style="left:763.400px;top:117.500px;width:24.700px;height:20.300px;border-radius:4.500px;background:#3f3f3d;box-shadow:0 0 0 .5px rgba(0,0,0,.2),0 1px 2.500px rgba(0,0,0,.3)"></div>
  <svg class="ic" style="left:770.800px;top:121.600px" width="10" height="12" viewBox="0 0 10 12"><path d="M2.900.8h4.200M3.600.9v2.900L1.900 6.300h6.200L6.400 3.800V.9M5 6.400v4.900" fill="none" stroke="#ecece9" stroke-width="1" stroke-linecap="round" stroke-linejoin="round"/></svg>
  <div class="abs" style="left:796.700px;top:117.200px;width:102px;height:21.200px;border-radius:5.500px;background:#6788b6;box-shadow:0 1px 2px rgba(0,0,0,.18)"></div>
  <svg class="ic" style="left:803px;top:122.200px" width="10.400" height="11" viewBox="0 0 10.400 11"><path d="M2.400.7h5.600M1.600 2.300h7.200" stroke="#e6ecf5" stroke-width=".9" stroke-linecap="round"/><rect x=".6" y="3.800" width="9.200" height="6.600" rx="1.500" fill="none" stroke="#e6ecf5" stroke-width="1"/></svg>
  <div class="t" style="left:817.600px;top:120.800px;font-size:9.500px;color:#fff;-webkit-text-stroke:.35px #fff">Preview (Line 23)</div>
  <div class="abs" style="left:784.6px;top:253.8px;width:3px;height:14.6px;border-radius:1px;background:#2e2f33"></div>
  <div class="abs" style="left:784.6px;top:282.8px;width:3px;height:36.6px;border-radius:1px;background:#2e2f33"></div>
  <div class="abs" style="left:784.6px;top:322.5px;width:3px;height:36.5px;border-radius:1px;background:#2e2f33"></div>
  <div class="abs" style="left:989px;top:311.800px;width:3px;height:47.200px;border-radius:1px;background:#2e2f33"></div>
  <div class="abs" style="left:787px;top:163.600px;width:202.400px;height:421.800px;border-radius:34.500px;background:#000;box-shadow:inset 0 0 0 1.500px #31312e"></div>
  <div class="abs" style="left:794px;top:170.500px;width:189.200px;height:408.800px;border-radius:28px;background:#fff"></div>
  <div class="abs" style="left:858.200px;top:176.300px;width:60.200px;height:17.600px;border-radius:8.800px;background:#000"></div>
  <svg class="ic" style="left:883.200px;top:360.500px" width="10.800" height="10" viewBox="0 0 10.800 10"><rect x=".5" y=".5" width="9.800" height="9" rx="1.800" fill="none" stroke="#0a7aff" stroke-width=".9"/><path d="M.8 2.100h9.200" stroke="#0a7aff" stroke-width="1.900"/><path d="M2.600 5.200h2.400M5.900 5.200h2.400M2.600 7.100h2.400M5.900 7.100h1.500" stroke="#0a7aff" stroke-width=".9" opacity=".8"/></svg>
  <div class="t" style="left:788px;width:200.500px;text-align:center;top:370.500px;font-size:8.240px;color:#111;-webkit-text-stroke:.25px #111">Welcome to Scrapper</div>
  <div class="abs" style="left:850.600px;top:386px;width:75.400px;height:16.400px;border-radius:3.500px;background:#0a7aff"></div>
  <div class="t" style="left:850.600px;width:75.400px;text-align:center;top:388.300px;font-size:8.100px;color:#fff;-webkit-text-stroke:.2px #fff">Sign in with Slack</div>
  <div class="cbtn" style="left:763.700px;width:64.400px"></div>
  <div class="cbtn" style="left:837.800px;width:24.200px"></div>
  <div class="cbtn" style="left:871.300px;width:20.700px"></div>
  <div class="cbtn" style="left:930.200px;width:82.800px"></div>
  <svg class="ic" style="left:770.200px;top:616.800px" width="11" height="11" viewBox="0 0 11 11"><circle cx="5.500" cy="5.500" r="5.500" fill="#0a84ff"/><path d="M4.200 3.200 8 5.500 4.200 7.800z" fill="#20262f"/></svg>
  <svg class="ic" style="left:789.300px;top:617px" width="10.400" height="10.200" viewBox="0 0 10.400 10.200"><rect x=".6" y=".6" width="9.200" height="9" rx="1.500" fill="none" stroke="#efefec" stroke-width="1.100"/><path d="M3.800 2.400v5l1.300-1.100.9 1.900.8-.4-.9-1.800h1.600z" fill="#efefec"/></svg>
  <svg class="ic" style="left:811px;top:618.100px" width="10.600" height="8.800" viewBox="0 0 10.600 8.800"><g fill="none" stroke="#b4b4b1" stroke-width=".95"><rect x="0.40" y="0.40" width="2.400" height="2" rx=".6"/><rect x="4.10" y="0.40" width="2.400" height="2" rx=".6"/><rect x="7.80" y="0.40" width="2.400" height="2" rx=".6"/><rect x="0.40" y="3.40" width="2.400" height="2" rx=".6"/><rect x="4.10" y="3.40" width="2.400" height="2" rx=".6"/><rect x="7.80" y="3.40" width="2.400" height="2" rx=".6"/><rect x="0.40" y="6.40" width="2.400" height="2" rx=".6"/><rect x="4.10" y="6.40" width="2.400" height="2" rx=".6"/><rect x="7.80" y="6.40" width="2.400" height="2" rx=".6"/></g></svg>
  <svg class="ic" style="left:844.300px;top:617.500px" width="11" height="10.400" viewBox="0 0 11 10.400"><rect x=".5" y=".5" width="10" height="3.800" rx="1.900" fill="none" stroke="#f0f0ed" stroke-width="1"/><circle cx="2.600" cy="2.400" r="1.100" fill="#f0f0ed"/><rect x="0" y="5.600" width="11" height="4.800" rx="2.400" fill="#f0f0ed"/><circle cx="8.500" cy="8" r="1.100" fill="#444442"/></svg>
  <svg class="ic" style="left:878.200px;top:617.300px" width="6.800" height="10.200" viewBox="0 0 6.800 10.200"><rect x=".5" y=".5" width="5.800" height="9.200" rx="1.300" fill="none" stroke="#c4c4c1" stroke-width="1"/><path d="M2.100.8v.5h2.600V.8" fill="none" stroke="#c4c4c1" stroke-width=".6"/><rect x="1.600" y="1.800" width="3.600" height="6.600" fill="#c4c4c1" opacity=".25"/></svg>
  <svg class="mg" style="left:936.7px" viewBox="0 0 12 12"><circle cx="5" cy="5" r="4.100" fill="none" stroke="#f0f0ed" stroke-width="1.200"/><path d="M8 8l3.300 3.300" stroke="#f0f0ed" stroke-width="1.500" stroke-linecap="round"/><path d="M3.200 5h3.600" stroke="#f0f0ed" stroke-width="1.200" stroke-linecap="round"/></svg>
  <svg class="mg" style="left:956.1px" viewBox="0 0 12 12"><circle cx="5" cy="5" r="4.100" fill="none" stroke="#f0f0ed" stroke-width="1.200"/><path d="M8 8l3.300 3.300" stroke="#f0f0ed" stroke-width="1.500" stroke-linecap="round"/><path d="M4.300 3.800 5.200 3.200v3.700" stroke="#f0f0ed" stroke-width="1" fill="none" stroke-linecap="round" stroke-linejoin="round"/></svg>
  <svg class="mg" style="left:975px" viewBox="0 0 12 12"><circle cx="5" cy="5" r="4.100" fill="none" stroke="#a3a3a0" stroke-width="1.200"/><path d="M8 8l3.300 3.300" stroke="#a3a3a0" stroke-width="1.500" stroke-linecap="round"/><rect x="3.400" y="3.400" width="3.200" height="3.200" rx=".6" fill="none" stroke="#a3a3a0" stroke-width=".9"/></svg>
  <svg class="mg" style="left:994.4px" viewBox="0 0 12 12"><circle cx="5" cy="5" r="4.100" fill="none" stroke="#f0f0ed" stroke-width="1.200"/><path d="M8 8l3.300 3.300" stroke="#f0f0ed" stroke-width="1.500" stroke-linecap="round"/><path d="M3.200 5h3.600M5 3.200v3.600" stroke="#f0f0ed" stroke-width="1.200" stroke-linecap="round"/></svg>

  <!-- ===== debug bar + debug area ===== -->
  <div class="abs" style="left:266px;top:642.500px;width:758px;height:1.200px;background:#18181a"></div>
  <div class="abs" style="left:266px;top:664.600px;width:758px;height:1px;background:#151513"></div>
  <div class="abs" style="left:560.200px;top:665.600px;width:1.400px;height:93.400px;background:#1a1a18"></div>
  <svg class="ic" style="left:274.800px;top:650.300px" width="13" height="8" viewBox="0 0 13 8"><path d="M1.400 0h7.700c.5 0 .9.200 1.200.500L12.800 3.400a.8.800 0 0 1 0 1.100L10.300 7.500c-.3.300-.7.500-1.200.500H1.400C.6 8 0 7.400 0 6.600V1.400C0 .6.600 0 1.400 0z" fill="#0a84ff"/></svg>
  <div class="dt" style="left:922.600px;top:647.600px;font-size:9.300px;color:#bcbcb9;word-spacing:.5px">Line: 26&nbsp; Col: 1</div>
  <div class="sep" style="left:995.500px;top:649px;height:11px"></div>
  <svg class="ic" style="left:1002.600px;top:649.100px" width="11.400" height="10.200" viewBox="0 0 11.400 10.200"><rect x=".6" y=".6" width="10.200" height="9" rx="1.800" fill="none" stroke="#c9c9c6" stroke-width="1"/><rect x="2.200" y="6" width="7" height="2.400" rx=".5" fill="#c9c9c6"/></svg>
  <div class="stub" style="top:666.15px">stub</div>
  <div class="stub" style="top:679.85px">stub</div>
  <div class="stub" style="top:693.55px">stub</div>
  <div class="stub" style="top:707.25px">stub</div>
  <div class="stub" style="top:720.95px">stub</div>
  <div class="dt" style="left:272.800px;top:740.600px;color:#eeeeeb">Auto</div>
  <svg class="ic" style="left:295px;top:743.300px" width="5" height="9" viewBox="0 0 5 9"><path d="M.8 3.400 2.500 1.700 4.200 3.400M.8 5.600 2.500 7.300 4.200 5.600" fill="none" stroke="#d8d8d5" stroke-width="1.250" stroke-linecap="round" stroke-linejoin="round"/></svg>
  <div class="sep" style="left:310.800px;top:742.500px;height:11px"></div>
  <svg class="ic" style="left:318.8px;top:743.6px" width="12.400" height="8.400" viewBox="0 0 12.400 8.400"><path d="M.5 4.200C2 1.700 4 .5 6.200.5s4.200 1.200 5.700 3.700C10.400 6.700 8.400 7.900 6.200 7.900S2 6.700.5 4.200z" fill="none" stroke="#64645f" stroke-width=".9"/><circle cx="6.200" cy="4.200" r="1.900" fill="none" stroke="#64645f" stroke-width=".9"/></svg>
  <svg class="ic" style="left:341.300px;top:742.400px" width="11" height="11" viewBox="0 0 11 11"><circle cx="5.500" cy="5.500" r="4.900" fill="none" stroke="#64645f" stroke-width=".9"/><path d="M5.500 4.900v3.100" stroke="#64645f" stroke-width="1" stroke-linecap="round"/><circle cx="5.500" cy="3" r=".75" fill="#64645f"/></svg>
  <div class="abs" style="left:416.800px;top:739px;width:140.400px;height:17.600px;border-radius:5px;background:#31322d;box-shadow:inset 0 0 0 .8px #3f403b"></div>
  <svg class="ic" style="left:420.700px;top:742.800px" width="10" height="10" viewBox="0 0 10 10"><circle cx="5" cy="5" r="4.400" fill="none" stroke="#c4c4c1" stroke-width="1"/><path d="M2.800 3.700h4.400M3.500 5.200h3M4.300 6.700h1.400" stroke="#c4c4c1" stroke-width=".9" stroke-linecap="round"/></svg>
  <div class="dt" style="left:434.600px;top:740.700px;color:#77777a;font-size:9.800px">Filter</div>
  <div class="dt" style="left:574px;top:740.600px;color:#e2e2df;font-size:9.280px">Executable</div>
  <div class="abs" style="left:632.700px;top:739.600px;width:49.400px;height:16.600px;border-radius:4px;background:#2f507f"></div>
  <div class="dt" style="left:632.700px;width:49.400px;text-align:center;top:740.600px;color:#fff;font-size:9.450px;-webkit-text-stroke:.32px #fff">Previews</div>
  <div class="sep" style="left:688.500px;top:742.500px;height:11px"></div>
  <svg class="ic" style="left:695.8px;top:743.6px" width="12.400" height="8.400" viewBox="0 0 12.400 8.400"><path d="M.5 4.200C2 1.700 4 .5 6.200.5s4.200 1.200 5.700 3.700C10.400 6.700 8.400 7.900 6.200 7.900S2 6.700.5 4.200z" fill="none" stroke="#64645f" stroke-width=".9"/><circle cx="6.200" cy="4.200" r="1.900" fill="none" stroke="#64645f" stroke-width=".9"/></svg>
  <svg class="ic" style="left:716px;top:742.300px" width="10" height="11.400" viewBox="0 0 10 11.400"><rect x="0" y="0" width="10" height="5.200" rx="2.600" fill="#0a84ff"/><circle cx="2.700" cy="2.600" r="1.200" fill="#292a30"/><rect x="0" y="6.200" width="10" height="5.200" rx="2.600" fill="#0a84ff"/><circle cx="7.300" cy="8.800" r="1.200" fill="#292a30"/></svg>
  <div class="abs" style="left:753.500px;top:739px;width:202px;height:17.600px;border-radius:5px;background:#33342f;box-shadow:inset 0 0 0 .8px #41423d"></div>
  <svg class="ic" style="left:757.200px;top:742.300px" width="21.400" height="11" viewBox="0 0 21.400 11"><rect x=".5" y=".5" width="20.400" height="10" rx="5" fill="none" stroke="#8e8e8b" stroke-width="1"/><path d="M4.300 3.700h5M5.200 5.500h3.200M6.100 7.300h1.400" stroke="#8e8e8b" stroke-width="1" stroke-linecap="round"/><path d="M12.800 4.700l1.700 1.700 1.700-1.700" stroke="#8e8e8b" stroke-width="1" fill="none" stroke-linecap="round" stroke-linejoin="round"/></svg>
  <div class="dt" style="left:780.800px;top:740.700px;color:#6d6d70;font-size:9.800px">Filter</div>
  <svg class="ic" style="left:963.400px;top:742.600px" width="9.600" height="11.600" viewBox="0 0 9.600 11.600"><path d="M.4 2.400h8.800M3.300 2.200V1.100c0-.3.200-.5.500-.5h2c.3 0 .5.200.5.500v1.100" fill="none" stroke="#8c8c89" stroke-width=".9" stroke-linecap="round"/><path d="M1.200 3.200h7.200l-.5 7.200c0 .5-.4.800-.9.800H2.600c-.5 0-.9-.3-.9-.8z" fill="#8c8c89"/><path d="M3.300 4.600l.2 5M4.800 4.600v5M6.300 4.600l-.2 5" stroke="#292a30" stroke-width=".6"/></svg>
  <div class="sep" style="left:981px;top:742.500px;height:11px"></div>
  <svg class="ic" style="left:988px;top:742.600px" width="11" height="10" viewBox="0 0 11 10"><rect x=".6" y=".6" width="9.800" height="8.800" rx="2" fill="none" stroke="#0a84ff" stroke-width="1.100"/><rect x="2.300" y="1.900" width="2.200" height="6.200" rx=".5" fill="#0a84ff"/></svg>
  <svg class="ic" style="left:1005.200px;top:742.600px" width="11" height="10" viewBox="0 0 11 10"><rect x=".6" y=".6" width="9.800" height="8.800" rx="2" fill="none" stroke="#0a84ff" stroke-width="1.100"/><rect x="6.500" y="1.900" width="2.200" height="6.200" rx=".5" fill="#0a84ff"/></svg>

  <!-- ===== inspector ===== -->
  <div class="abs" style="left:1025px;top:61.500px;width:210px;height:1px;background:#3f403b"></div>
  <div class="abs" style="left:1025px;top:83.900px;width:210px;height:1px;background:#3f403b"></div>
  <svg class="ic" style="left:1077px;top:67.800px" width="8.800" height="11.400" viewBox="0 0 8.800 11.400"><path d="M1.400 0h3.700v2.700c0 .6.400 1 1 1h2.700v6.300c0 .8-.6 1.400-1.400 1.400H1.400C.6 11.400 0 10.800 0 10V1.400C0 .6.600 0 1.400 0z" fill="#0a84ff"/><path d="M6 .2 8.600 2.800H6.300a.3.300 0 0 1-.3-.3z" fill="#0a84ff"/></svg>
  <svg class="ic" style="left:1099.500px;top:67.900px" width="11" height="11" viewBox="0 0 11 11"><circle cx="5.500" cy="5.500" r="4.900" fill="none" stroke="#b3b3b0" stroke-width="1"/><path d="M5.500 2.600v3H3.200" fill="none" stroke="#b3b3b0" stroke-width="1" stroke-linecap="round"/></svg>
  <svg class="ic" style="left:1123.800px;top:67.900px" width="11" height="11" viewBox="0 0 11 11"><circle cx="5.500" cy="5.500" r="4.900" fill="none" stroke="#b3b3b0" stroke-width="1"/><path d="M4.100 4.300c0-.8.600-1.400 1.400-1.400s1.400.6 1.400 1.300c0 1.100-1.400 1.100-1.400 2.300" fill="none" stroke="#b3b3b0" stroke-width=".9" stroke-linecap="round"/><circle cx="5.500" cy="8" r=".55" fill="#b3b3b0"/></svg>
  <svg class="ic" style="left:1148.200px;top:67.900px" width="11" height="11" viewBox="0 0 11 11"><circle cx="5.500" cy="5.500" r="4.900" fill="none" stroke="#b3b3b0" stroke-width="1"/><circle cx="5.500" cy="3" r=".8" fill="#b3b3b0"/><path d="M3 4.500h5M5.500 4.600v2M5.500 6.400 4.200 8.600M5.500 6.400 6.800 8.600" fill="none" stroke="#b3b3b0" stroke-width=".9" stroke-linecap="round"/></svg>
  <svg class="ic" style="left:1172.500px;top:68.400px" width="11.400" height="10.400" viewBox="0 0 11.400 10.400"><path d="M.5 1.600h10.400M.5 5.200h10.400M.5 8.800h10.400" stroke="#b3b3b0" stroke-width="1" stroke-linecap="round"/><path d="M7.800.4v2.400M3.600 4v2.400M7.800 7.600V10" stroke="#b3b3b0" stroke-width="1.600" stroke-linecap="round"/></svg>
  <div class="ih" style="top:88.1px">Identity and Type</div>
  <div class="il" style="top:111.0px">Name</div>
  <div class="fld" style="left:1093px;top:110px;width:135.400px;height:13px"></div>
  <div class="iv" style="left:1095.600px;top:110.300px">ContentView.swift</div>
  <div class="il" style="top:128.7px">Type</div>
  <div class="pop" style="top:128.6px"><i></i><svg style="position:absolute;right:3.200px;top:1.800px" width="5.600" height="8.400" viewBox="0 0 5.600 8.400"><path d="M.9 3 2.800 1.100 4.700 3M.9 5.400 2.800 7.300 4.700 5.400" fill="none" stroke="#fff" stroke-width="1" stroke-linecap="round" stroke-linejoin="round"/></svg></div><div class="iv" style="left:1098.200px;top:128.0px;color:#f0f0ed">Default - Swift Source</div>
  <div class="isep" style="top:145.300px"></div>
  <div class="il" style="top:150.5px">Location</div>
  <div class="pop" style="top:150.5px"><i></i><svg style="position:absolute;right:3.200px;top:1.800px" width="5.600" height="8.400" viewBox="0 0 5.600 8.400"><path d="M.9 3 2.800 1.100 4.700 3M.9 5.400 2.800 7.300 4.700 5.400" fill="none" stroke="#fff" stroke-width="1" stroke-linecap="round" stroke-linejoin="round"/></svg></div><div class="iv" style="left:1098.200px;top:149.9px;color:#f0f0ed;font-size:9.350px">Relative to Group</div>
  <div class="iv" style="left:1093.900px;top:166.300px">ContentView.swift</div>
  <svg class="ic" style="left:1219px;top:168.500px" width="10.200" height="8.400" viewBox="0 0 12 9.800"><path d="M0 1.500C0 .7.500.2 1.200.2h2.400c.5 0 .8.200 1.100.5l.6.600h5.500c.7 0 1.200.5 1.200 1.200v.4H0z" fill="#a9a9a6"/><path d="M0 3.600h12v4.900c0 .7-.5 1.200-1.200 1.200H1.200C.5 9.700 0 9.200 0 8.500z" fill="#a9a9a6"/></svg>
  <div class="il" style="top:181.4px">Full Path</div>
  <div class="iv" style="left:1093.900px;top:180.900px;line-height:11.200px;height:auto;white-space:normal;width:120px">/Users/ajs256/code/swift/<br>Scrapper/Scrapper/<br>ContentView.swift</div>
  <svg class="ic" style="left:1204.800px;top:205.600px" width="8.400" height="8.400" viewBox="0 0 8.400 8.400"><circle cx="4.200" cy="4.200" r="4.200" fill="#b9b9b6"/><path d="M2 4.200h4M4.500 2.400l1.800 1.800-1.800 1.800" fill="none" stroke="#30312c" stroke-width="1" stroke-linecap="round" stroke-linejoin="round"/></svg>
  <div class="isep" style="top:226px"></div>
  <div class="ih" style="top:230.7px;letter-spacing:-.18px">On Demand Resource Tags</div>
  <div class="fld" style="left:1031.200px;top:252px;width:197.200px;height:14.800px;background:#363731;box-shadow:inset 0 -1px 0 #3f403a"></div>
  <div class="iv" style="left:1034.100px;top:253px;color:#70716c">Only resources are taggable</div>
  <div class="isep" style="top:277.700px"></div>
  <div class="ih" style="top:282.2px">Target Membership</div>
  <div class="abs" style="left:1030.600px;top:299.300px;width:197.800px;height:51.800px;background:#272822;border:1px solid #5b5c57"></div>
  <div class="cb" style="left:1037.200px;top:304.200px"><svg width="10" height="10" viewBox="0 0 10 10"><path d="M2.400 5.200 4.200 7.100 7.700 2.700" fill="none" stroke="#fff" stroke-width="1.400" stroke-linecap="round" stroke-linejoin="round"/></svg></div>
  <svg class="ic" style="left:1054.900px;top:304.400px" width="9.800" height="9.800" viewBox="0 0 13 13"><rect width="13" height="13" rx="2.600" fill="#b9b9b6"/><path d="M6.500 3 3.800 9.200M6.500 3 9.200 9.200M3 7.500h7" stroke="#30312c" stroke-width="1.300" stroke-linecap="round" fill="none"/></svg>
  <div class="iv" style="left:1069px;top:302.900px">Scrapper</div>
  <div class="isep" style="top:357.200px"></div>
  <div class="ih" style="top:362.2px">Text Settings</div>
  <div class="il" style="top:384.2px">Text Encoding</div>
  <div class="pop" style="top:384px"><i></i><svg style="position:absolute;right:3.200px;top:1.800px" width="5.600" height="8.400" viewBox="0 0 5.600 8.400"><path d="M.9 3 2.800 1.100 4.700 3M.9 5.400 2.800 7.300 4.700 5.400" fill="none" stroke="#fff" stroke-width="1" stroke-linecap="round" stroke-linejoin="round"/></svg></div><div class="iv" style="left:1098.200px;top:383.4px;color:#8b8c87;font-size:9.430px">No Explicit Encoding</div>
  <div class="il" style="top:402.0px">Line Endings</div>
  <div class="pop" style="top:401.8px"><i></i><svg style="position:absolute;right:3.200px;top:1.800px" width="5.600" height="8.400" viewBox="0 0 5.600 8.400"><path d="M.9 3 2.800 1.100 4.700 3M.9 5.400 2.800 7.300 4.700 5.400" fill="none" stroke="#fff" stroke-width="1" stroke-linecap="round" stroke-linejoin="round"/></svg></div><div class="iv" style="left:1098.200px;top:401.2px;color:#8b8c87;font-size:9.430px">No Explicit Line Endings</div>
  <div class="isep" style="top:418.500px"></div>
  <div class="il" style="top:424.1px">Indent Using</div>
  <div class="pop" style="top:423.8px"><i></i><svg style="position:absolute;right:3.200px;top:1.800px" width="5.600" height="8.400" viewBox="0 0 5.600 8.400"><path d="M.9 3 2.800 1.100 4.700 3M.9 5.400 2.800 7.300 4.700 5.400" fill="none" stroke="#fff" stroke-width="1" stroke-linecap="round" stroke-linejoin="round"/></svg></div><div class="iv" style="left:1098.200px;top:423.900px;color:#f0f0ed;font-size:9.150px">Spaces</div>
  <div class="il" style="top:442.7px">Widths</div>
  <div class="fld" style="left:1093px;top:442.300px;width:53.400px;height:12px"></div>
  <div class="iv" style="left:1093px;width:50.400px;text-align:right;top:441.800px">4</div>
  <div class="fld" style="left:1164px;top:442.300px;width:54.600px;height:12px"></div>
  <div class="iv" style="left:1164px;width:51.600px;text-align:right;top:441.800px">4</div>
  <div class="stp" style="left:1148px;top:442.100px"><svg width="9" height="12.400" viewBox="0 0 9 12.400"><path d="M2.400 4.700 4.500 2.600 6.600 4.700M2.400 7.700 4.500 9.800 6.600 7.700" fill="none" stroke="#e4e4e1" stroke-width="1" stroke-linecap="round" stroke-linejoin="round"/></svg></div>
  <div class="stp" style="left:1220.200px;top:442.100px"><svg width="9" height="12.400" viewBox="0 0 9 12.400"><path d="M2.400 4.700 4.500 2.600 6.600 4.700M2.400 7.700 4.500 9.800 6.600 7.700" fill="none" stroke="#e4e4e1" stroke-width="1" stroke-linecap="round" stroke-linejoin="round"/></svg></div>
  <div class="il" style="left:1099.700px;width:40px;text-align:center;top:454.400px">Tab</div>
  <div class="il" style="left:1171px;width:40px;text-align:center;top:454.400px">Indent</div>
  <div class="cb" style="left:1093px;top:470.200px"><svg width="10" height="10" viewBox="0 0 10 10"><path d="M2.400 5.200 4.200 7.100 7.700 2.700" fill="none" stroke="#fff" stroke-width="1.400" stroke-linecap="round" stroke-linejoin="round"/></svg></div>
  <div class="iv" style="left:1106.300px;top:468.800px;font-size:9.300px">Wrap lines</div>
  <div class="isep" style="top:490.400px"></div>
 </div></div>
 <div id="hl"></div>
</div>
</body>
</html>
